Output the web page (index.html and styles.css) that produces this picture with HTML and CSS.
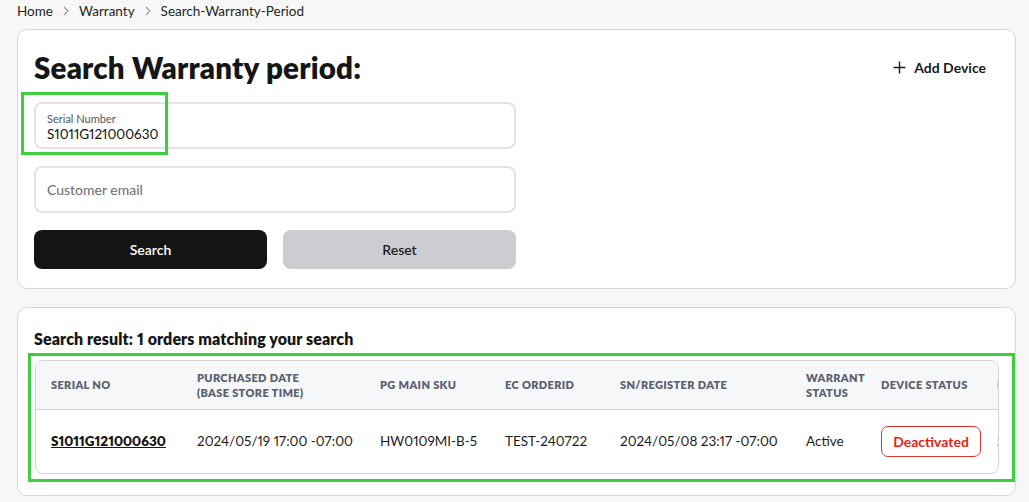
FILE: index.html
```html
<!DOCTYPE html>
<html lang="en">
<head>
<meta charset="utf-8">
<title>Search Warranty Period</title>
<link rel="stylesheet" href="styles.css">
</head>
<body>
<div class="page">
  <nav class="breadcrumb">
    <span class="crumb">Home</span>
    <span class="sep"><svg width="8" height="10" viewBox="0 0 8 10"><path d="M2 1l4 4-4 4" fill="none" stroke="#9a9a9a" stroke-width="1.2"/></svg></span>
    <span class="crumb">Warranty</span>
    <span class="sep"><svg width="8" height="10" viewBox="0 0 8 10"><path d="M2 1l4 4-4 4" fill="none" stroke="#9a9a9a" stroke-width="1.2"/></svg></span>
    <span class="crumb">Search-Warranty-Period</span>
  </nav>

  <section class="card search-card">
    <div class="search-head">
      <h1 class="title">Search Warranty period:</h1>
      <button class="add-device" type="button">
        <svg width="13" height="13" viewBox="0 0 13 13"><path d="M6.5 0.5v12M0.5 6.5h12" stroke="#1a1a1a" stroke-width="1.4"/></svg>
        <span>Add Device</span>
      </button>
    </div>
    <div class="form">
      <div class="field filled">
        <span class="field-label">Serial Number</span>
        <span class="field-value">S1011G121000630</span>
      </div>
      <div class="field">
        <span class="field-placeholder">Customer email</span>
      </div>
      <div class="actions">
        <button class="btn btn-primary" type="button">Search</button>
        <button class="btn btn-secondary" type="button">Reset</button>
      </div>
    </div>
  </section>

  <section class="card result-card">
    <h2 class="result-title">Search result: 1 orders matching your search</h2>
    <div class="table-wrap">
      <table class="table">
        <colgroup>
          <col class="c1"><col class="c2"><col class="c3"><col class="c4"><col class="c5"><col class="c6"><col class="c7"><col class="c8">
        </colgroup>
        <thead>
          <tr>
            <th>Serial No</th>
            <th>Purchased Date<br>(Base Store Time)</th>
            <th>PG Main SKU</th>
            <th>EC OrderID</th>
            <th>SN/Register Date</th>
            <th>Warrant Status</th>
            <th>Device Status</th>
            <th>Last Modified Date</th>
          </tr>
        </thead>
        <tbody>
          <tr>
            <td><a class="serial-link" href="#">S1011G121000630</a></td>
            <td>2024/05/19 17:00 -07:00</td>
            <td>HW0109MI-B-5</td>
            <td>TEST-240722</td>
            <td>2024/05/08 23:17 -07:00</td>
            <td>Active</td>
            <td><span class="badge">Deactivated</span></td>
            <td>2024/07/22 10:00 -07:00</td>
          </tr>
        </tbody>
      </table>
    </div>
  </section>

  <div class="highlight hl-serial"></div>
  <div class="highlight hl-table"></div>
</div>
</body>
</html>
```

FILE: styles.css
```css
* { box-sizing: border-box; }

html, body {
  margin: 0;
  padding: 0;
  background: #f7f7f7;
}

body {
  font-family: "Lato", "Inter", "Liberation Sans", sans-serif;
  font-variant-numeric: proportional-nums;
  color: #1a1a1a;
}

.page {
  position: relative;
  padding: 0 13px 0 17px;
}

.breadcrumb {
  height: 29px;
  display: flex;
  align-items: flex-start;
  gap: 9px;
  padding-top: 2px;
  font-size: 13.5px;
  line-height: 18px;
  color: #1f1f1f;
}

.sep {
  display: flex;
  align-items: center;
  height: 18px;
}

.card {
  background: #ffffff;
  border: 1px solid #d7d7d7;
  border-radius: 10px;
}

.search-card {
  height: 260px;
  padding: 20px 29px 18px 16px;
}

.search-head {
  display: flex;
  justify-content: space-between;
  align-items: flex-start;
}

.title {
  margin: 0;
  font-size: 29.5px;
  line-height: 36px;
  font-weight: 800;
  color: #161616;
  letter-spacing: 0.2px;
}

.add-device {
  display: flex;
  align-items: center;
  gap: 8px;
  margin-top: 9px;
  padding: 0;
  border: 0;
  background: none;
  font-family: inherit;
  font-size: 14px;
  font-weight: 700;
  color: #1a1a1a;
}

.form {
  width: 482px;
  margin-top: 16px;
  display: flex;
  flex-direction: column;
  gap: 17px;
}

.field {
  height: 47px;
  border: 2px solid #e3e3e3;
  border-radius: 8px;
  padding: 0 11px;
  display: flex;
  flex-direction: column;
  justify-content: center;
}

.field.filled {
  justify-content: flex-start;
  padding-top: 8px;
}

.field-label {
  font-size: 11px;
  line-height: 14px;
  color: #555558;
}

.field-value {
  font-size: 13.5px;
  line-height: 17px;
  color: #111;
}

.field-placeholder {
  font-size: 14px;
  color: #6b6b70;
}

.actions {
  display: flex;
  gap: 16px;
}

.btn {
  flex: 1;
  height: 39px;
  border: 0;
  border-radius: 8px;
  font-family: inherit;
  font-size: 14px;
  font-weight: 600;
}

.btn-primary {
  background: #141414;
  color: #ffffff;
}

.btn-secondary {
  background: #cdcdd1;
  color: #1e1e1e;
}

.result-card {
  margin-top: 18px;
  height: 189px;
  padding: 21px 16px 0 17px;
}

.result-title {
  margin: 0 0 11px -1px;
  font-size: 16px;
  line-height: 20px;
  font-weight: 800;
  color: #161616;
  letter-spacing: 0.1px;
}

.table-wrap {
  border: 1px solid #d4d4d4;
  border-radius: 8px;
  overflow: hidden;
}

.table {
  width: 1146px;
  border-collapse: collapse;
  table-layout: fixed;
}

.c1 { width: 146px; }
.c2 { width: 183px; }
.c3 { width: 125px; }
.c4 { width: 115px; }
.c5 { width: 186px; }
.c6 { width: 75px; }
.c7 { width: 116px; }
.c8 { width: 200px; }

.table th {
  height: 48px;
  background: #f6f7f9;
  border-bottom: 1px solid #d4d4d4;
  text-align: left;
  vertical-align: middle;
  padding: 0 0 0 15px;
  font-size: 11px;
  line-height: 15px;
  font-weight: 800;
  text-transform: uppercase;
  color: #5a6070;
  letter-spacing: 0.35px;
}

.table td {
  height: 64px;
  padding: 0 0 0 15px;
  font-size: 13.5px;
  color: #1c1c1c;
  white-space: nowrap;
  vertical-align: middle;
}

.serial-link {
  color: #161616;
  font-weight: 800;
  text-decoration: underline;
}

.badge {
  display: inline-flex;
  align-items: center;
  justify-content: center;
  width: 100px;
  height: 31px;
  border: 1px solid #e2332b;
  border-radius: 7px;
  color: #e2231a;
  font-weight: 700;
  font-size: 14px;
}

.highlight {
  position: absolute;
  border: 3px solid #3ecf3e;
  pointer-events: none;
}

.hl-serial {
  left: 21px;
  top: 92px;
  width: 147px;
  height: 63px;
}

.hl-table {
  left: 28px;
  top: 353px;
  width: 987px;
  height: 129px;
}
```
